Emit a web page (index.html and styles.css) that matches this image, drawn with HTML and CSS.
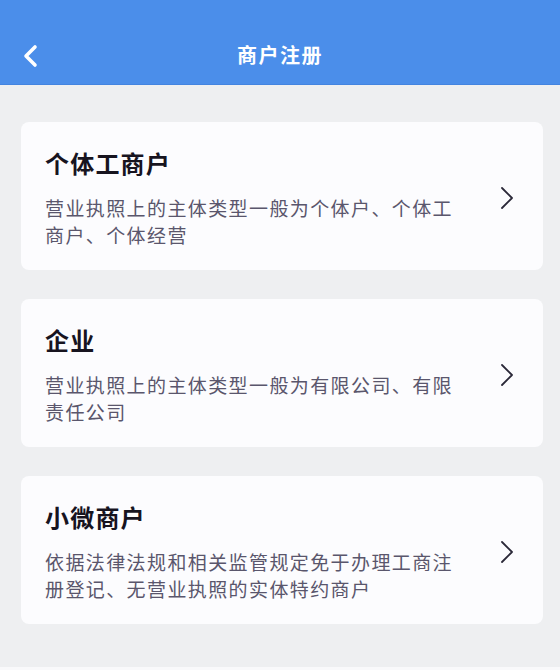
FILE: index.html
```html
<!DOCTYPE html>
<html lang="zh-CN">
<head>
<meta charset="utf-8">
<title>商户注册</title>
<link rel="stylesheet" href="styles.css">
</head>
<body>
<div class="page">
  <header class="topbar">
    <button class="back" aria-label="返回">
      <svg width="16" height="24" viewBox="0 0 16 24"><polyline points="13,3 4,12 13,21" fill="none" stroke="#fff" stroke-width="3.6" stroke-linecap="round" stroke-linejoin="round"/></svg>
    </button>
    <h1 class="title">商户注册</h1>
  </header>
  <main class="list">
    <a class="card">
      <div class="card-text">
        <h2 class="card-title">个体工商户</h2>
        <p class="card-desc">营业执照上的主体类型一般为个体户、个体工商户、个体经营</p>
      </div>
      <svg class="arrow" width="14" height="24" viewBox="0 0 14 24"><polyline points="2,2 12,12 2,22" fill="none" stroke="#2a2838" stroke-width="1.8" stroke-linecap="round" stroke-linejoin="round"/></svg>
    </a>
    <a class="card">
      <div class="card-text">
        <h2 class="card-title">企业</h2>
        <p class="card-desc">营业执照上的主体类型一般为有限公司、有限责任公司</p>
      </div>
      <svg class="arrow" width="14" height="24" viewBox="0 0 14 24"><polyline points="2,2 12,12 2,22" fill="none" stroke="#2a2838" stroke-width="1.8" stroke-linecap="round" stroke-linejoin="round"/></svg>
    </a>
    <a class="card">
      <div class="card-text">
        <h2 class="card-title">小微商户</h2>
        <p class="card-desc">依据法律法规和相关监管规定免于办理工商注册登记、无营业执照的实体特约商户</p>
      </div>
      <svg class="arrow" width="14" height="24" viewBox="0 0 14 24"><polyline points="2,2 12,12 2,22" fill="none" stroke="#2a2838" stroke-width="1.8" stroke-linecap="round" stroke-linejoin="round"/></svg>
    </a>
  </main>
  <div class="bottom-edge"></div>
</div>
</body>
</html>
```
FILE: styles.css
```css
* { box-sizing: border-box; }
html, body { margin: 0; padding: 0; }
body {
  font-family: "Noto Sans CJK SC", "Noto Sans", sans-serif;
  background: #eeeff1;
}
.page {
  display: flex;
  flex-direction: column;
  height: 670px;
}
.topbar {
  position: relative;
  height: 85px;
  padding-top: 26px;
  background: #4b8eea;
  border-bottom: 1px solid #4384e0;
  display: flex;
  align-items: center;
  justify-content: center;
}
.back {
  position: absolute;
  left: 22px;
  top: 44px;
  width: 16px;
  height: 24px;
  padding: 0;
  border: 0;
  background: none;
  display: flex;
}
.title {
  margin: 0;
  color: #ffffff;
  font-size: 20px;
  font-weight: 700;
  letter-spacing: 1.5px;
  line-height: 28px;
}
.list {
  flex: 1;
  display: flex;
  flex-direction: column;
  gap: 29px;
  padding: 37px 17px 0 21px;
}
.card {
  display: flex;
  align-items: center;
  height: 148px;
  padding: 26px 29px 22px 24px;
  background: #fcfcfe;
  border-radius: 8px;
}
.card-text {
  width: 414px;
  flex: none;
}
.card-title {
  margin: 0;
  font-size: 24px;
  line-height: 30px;
  font-weight: 700;
  color: #17141f;
  letter-spacing: 1.2px;
}
.card-desc {
  margin: 16px 0 0;
  font-size: 19px;
  line-height: 27px;
  color: #5a566c;
  letter-spacing: 1.4px;
}
.arrow {
  margin-left: auto;
  flex: none;
}
.bottom-edge {
  height: 3px;
  background: #f9f9fb;
}
```
